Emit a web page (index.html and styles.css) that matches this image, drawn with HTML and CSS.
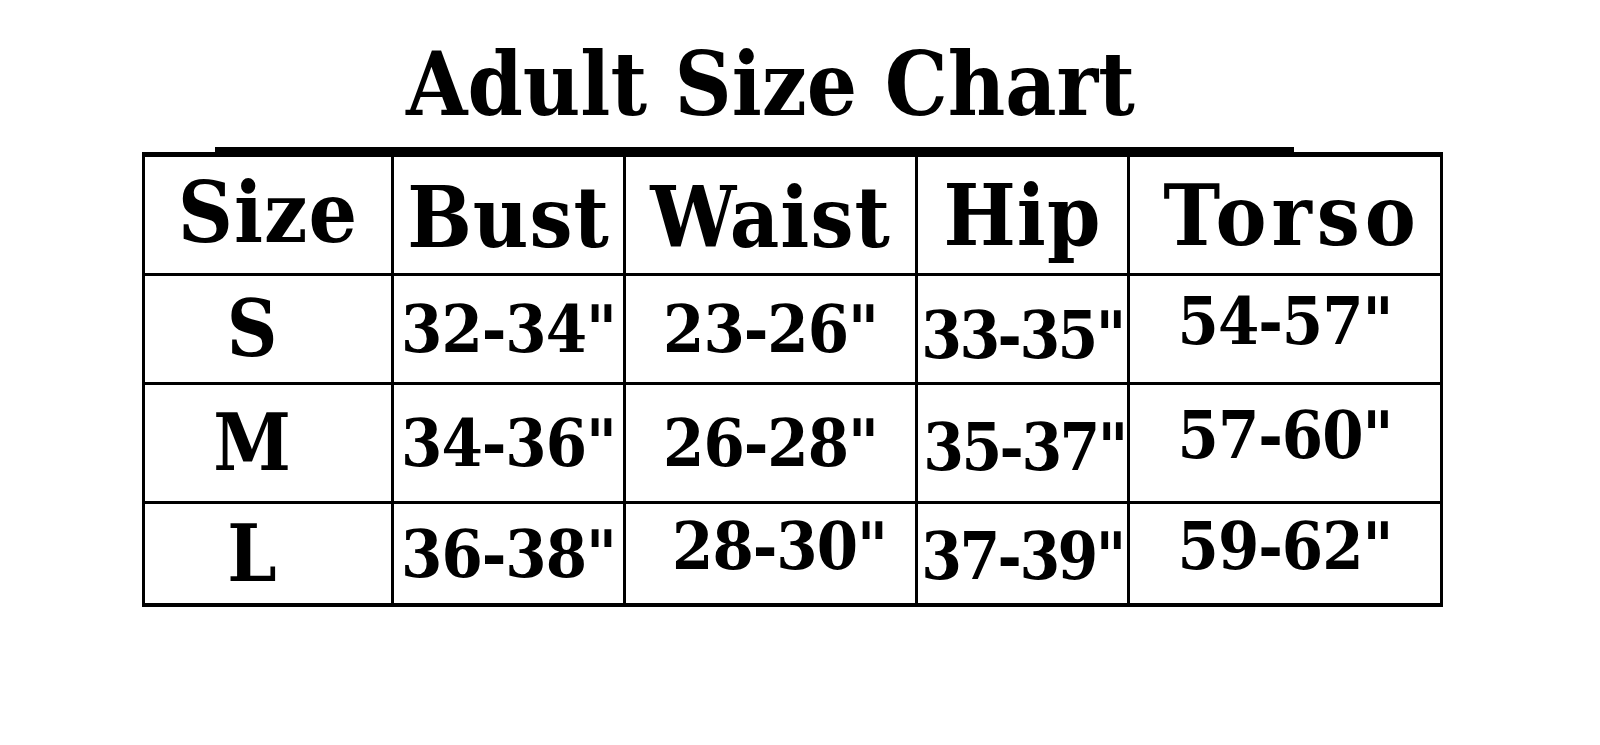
FILE: index.html
```html
<!DOCTYPE html>
<html lang="en">
<head>
<meta charset="utf-8">
<title>Adult Size Chart</title>
<link rel="stylesheet" href="styles.css">
</head>
<body>
<main class="page">
  <h1 class="title">Adult Size Chart</h1>
  <section class="chart">
    <div class="chart-rule"></div>
    <div class="size-grid">
      <div class="cell head low-s">Size</div>
      <div class="cell head low-l">Bust</div>
      <div class="cell head low-l">Waist</div>
      <div class="cell head">Hip</div>
      <div class="cell head wide">Torso</div>

      <div class="cell size">S</div>
      <div class="cell val">32-34"</div>
      <div class="cell val">23-26"</div>
      <div class="cell val hip drop-1">33-35"</div>
      <div class="cell val lift">54-57"</div>

      <div class="cell size">M</div>
      <div class="cell val">34-36"</div>
      <div class="cell val">26-28"</div>
      <div class="cell val hip drop-2">35-37"</div>
      <div class="cell val lift">57-60"</div>

      <div class="cell size last">L</div>
      <div class="cell val last">36-38"</div>
      <div class="cell val last lift nudge">28-30"</div>
      <div class="cell val last hip drop-3">37-39"</div>
      <div class="cell val last lift">59-62"</div>
    </div>
  </section>
</main>
</body>
</html>
```

FILE: styles.css
```css
html, body {
  margin: 0;
  padding: 0;
  background: #ffffff;
}

body {
  color: #000000;
  font-family: "DejaVu Serif Condensed", "DejaVu Serif", "Liberation Serif", serif;
  font-stretch: condensed;
  font-weight: bold;
}

.page {
  width: 1600px;
  height: 745px;
  overflow: hidden;
}

.title {
  margin: 40px 0 0 406px;
  font-size: 88px;
  line-height: 88px;
  font-weight: bold;
  white-space: nowrap;
}

.chart {
  margin: 19px 0 0 142px;
  width: 1301px;
}

.chart-rule {
  margin-left: 73px;
  width: 1079px;
  height: 5px;
  background: #000000;
}

.size-grid {
  display: grid;
  grid-template-columns: 249px 232px 292px 212px 313px;
  grid-template-rows: 119px 109px 119px 103px;
  border-left: 3px solid #000000;
  border-top: 5px solid #000000;
  width: 1298px;
}

.cell {
  box-sizing: border-box;
  display: flex;
  align-items: center;
  justify-content: center;
  border-right: 3px solid #000000;
  border-bottom: 3px solid #000000;
  white-space: nowrap;
  line-height: 1;
}

.cell.last {
  border-bottom-width: 4px;
}

.head {
  font-size: 85px;
  letter-spacing: 1px;
}

.head.wide {
  letter-spacing: 5px;
  padding-left: 14px;
}

.head.low-l {
  padding-top: 4px;
}

.head.low-s {
  padding-bottom: 6px;
}

.size {
  font-size: 78px;
  padding-right: 32px;
}

.val {
  font-size: 66px;
  letter-spacing: -1px;
}

.val.lift {
  padding-bottom: 16px;
}

.val.nudge {
  padding-left: 18px;
}

.val.hip {
  font-size: 65px;
  letter-spacing: -2.5px;
}

.val.drop-1 {
  padding-top: 12px;
}

.val.drop-2 {
  padding-top: 8px;
  padding-left: 4px;
}

.val.drop-3 {
  padding-top: 6px;
}
```
